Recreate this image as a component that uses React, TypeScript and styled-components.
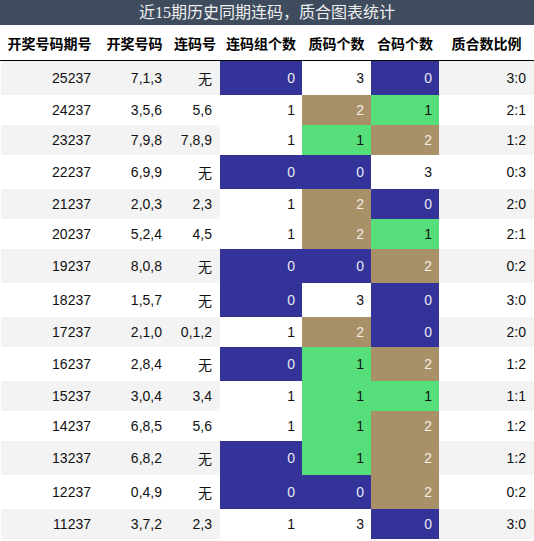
import React from "react";
import styled, { createGlobalStyle } from "styled-components";

type Tone = "blue" | "green" | "tan" | "none";

const tones: Record<Tone, { bg: string; fg: string }> = {
  blue: { bg: "#333399", fg: "#e8e8f0" },
  green: { bg: "#55de7a", fg: "#111111" },
  tan: { bg: "#a89068", fg: "#f2eee6" },
  none: { bg: "#ffffff", fg: "#111111" }
};

const rows: [string, string, string, number, number, number, string][] = [
  ["25237", "7,1,3", "无", 0, 3, 0, "3:0"],
  ["24237", "3,5,6", "5,6", 1, 2, 1, "2:1"],
  ["23237", "7,9,8", "7,8,9", 1, 1, 2, "1:2"],
  ["22237", "6,9,9", "无", 0, 0, 3, "0:3"],
  ["21237", "2,0,3", "2,3", 1, 2, 0, "2:0"],
  ["20237", "5,2,4", "4,5", 1, 2, 1, "2:1"],
  ["19237", "8,0,8", "无", 0, 0, 2, "0:2"],
  ["18237", "1,5,7", "无", 0, 3, 0, "3:0"],
  ["17237", "2,1,0", "0,1,2", 1, 2, 0, "2:0"],
  ["16237", "2,8,4", "无", 0, 1, 2, "1:2"],
  ["15237", "3,0,4", "3,4", 1, 1, 1, "1:1"],
  ["14237", "6,8,5", "5,6", 1, 1, 2, "1:2"],
  ["13237", "6,8,2", "无", 0, 1, 2, "1:2"],
  ["12237", "0,4,9", "无", 0, 0, 2, "0:2"],
  ["11237", "3,7,2", "2,3", 1, 3, 0, "3:0"]
];

const headers = ["开奖号码期号", "开奖号码", "连码号", "连码组个数", "质码个数", "合码个数", "质合数比例"];
const widths = [99, 71, 50, 82, 69, 68, 95];

// 0 -> blue, 1 -> green, 2 -> tan, 3 -> plain
const countTone = (n: number): Tone => (["blue", "green", "tan", "none"] as Tone[])[n];
const groupTone = (n: number): Tone => (n === 0 ? "blue" : "none");

const GlobalStyle = createGlobalStyle`
  html, body {
    margin: 0;
    padding: 0;
    background: #ffffff;
  }
`;

const Wrap = styled.div`
  width: 534px;
  font-family: "Liberation Sans", "Noto Sans CJK SC", sans-serif;
`;

const Title = styled.div`
  height: 25px;
  line-height: 25px;
  background: #3e4c5e;
  color: #f0f0f0;
  text-align: center;
  font-family: "Liberation Serif", "Noto Sans CJK SC", serif;
  font-size: 16px;
`;

const Table = styled.table`
  width: 534px;
  border-collapse: collapse;
  table-layout: fixed;
`;

const HeadCell = styled.th`
  height: 35px;
  padding: 0;
  text-align: center;
  font-family: "Noto Sans CJK SC", sans-serif;
  font-size: 14px;
  font-weight: 700;
  color: #000000;
  border-bottom: 1px solid #000000;
  white-space: nowrap;
`;

const Row = styled.tr<{ $striped: boolean; $tall: boolean }>`
  background: ${(p) => (p.$striped ? "#f3f3f3" : "#ffffff")};
  height: ${(p) => (p.$tall ? 34 : 30)}px;

  & > td:first-child {
    box-shadow: inset 1px 0 0 #ffffff;
  }
`;

const Cell = styled.td`
  padding: 0 8px 0 0;
  text-align: right;
  font-size: 14px;
  color: #111111;
  white-space: nowrap;
`;

const CjkCell = styled(Cell)`
  font-family: "Liberation Sans", "Noto Sans CJK SC", sans-serif;
`;

const CountCell = styled.td<{ $tone: Tone }>`
  padding: 0 7px 0 0;
  text-align: right;
  font-size: 14px;
  background: ${(p) => tones[p.$tone].bg};
  color: ${(p) => tones[p.$tone].fg};
`;

const App = () => {
  return (
    <Wrap>
      <GlobalStyle />
      <Title>近15期历史同期连码，质合图表统计</Title>
      <Table>
        <colgroup>
          {widths.map((w, i) => (
            <col key={i} style={{ width: w }} />
          ))}
        </colgroup>
        <thead>
          <tr>
            {headers.map((h) => (
              <HeadCell key={h}>{h}</HeadCell>
            ))}
          </tr>
        </thead>
        <tbody>
          {rows.map(([issue, nums, link, group, prime, comp, ratio], i) => (
            <Row key={issue} $striped={i % 2 === 0} $tall={link === "无"}>
              <Cell>{issue}</Cell>
              <Cell>{nums}</Cell>
              <CjkCell>{link}</CjkCell>
              <CountCell $tone={groupTone(group)}>{group}</CountCell>
              <CountCell $tone={countTone(prime)}>{prime}</CountCell>
              <CountCell $tone={countTone(comp)}>{comp}</CountCell>
              <Cell>{ratio}</Cell>
            </Row>
          ))}
        </tbody>
      </Table>
    </Wrap>
  );
};

export default App;
